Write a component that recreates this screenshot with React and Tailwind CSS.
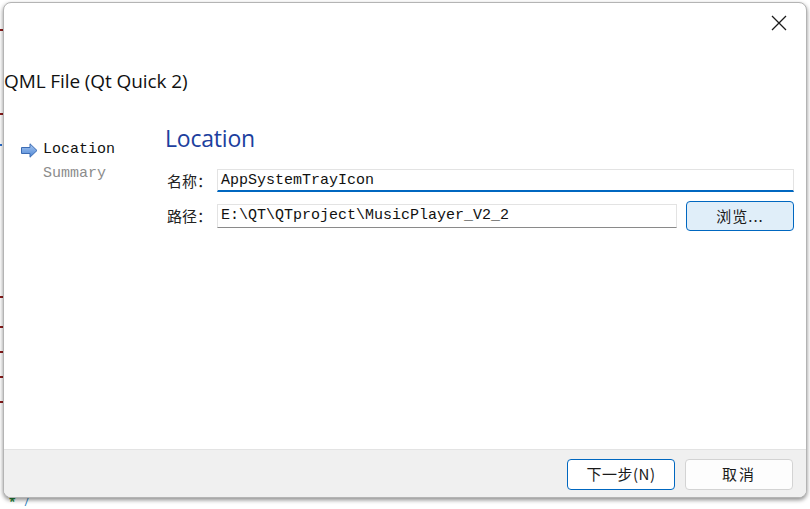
import React from "react";

// --- background editor fragments (left edge peeks out behind the dialog) ---
const marks = [
  { h: 31, color: "#8b1a1a", w: 3 },
  { h: 84, color: "#8b1a1a", w: 3 },
  { h: 31, color: "#2a6fd0", w: 2 },
  { h: 152, color: "#8b1a1a", w: 3 },
  { h: 30, color: "#8b1a1a", w: 3 },
  { h: 25, color: "#8b1a1a", w: 3 },
  { h: 25, color: "#8b1a1a", w: 3 },
  { h: 25, color: "#8b1a1a", w: 3 },
];

const IconArrow = () => (
  <svg width="17" height="15" viewBox="0 0 17 15">
    <defs>
      <linearGradient id="arr" x1="0" y1="0" x2="0" y2="1">
        <stop offset="0" stopColor="#a9c8f2" />
        <stop offset="1" stopColor="#4d86d4" />
      </linearGradient>
    </defs>
    <polygon
      points="0.5,4.5 9,4.5 9,0.8 16,7.5 9,14.2 9,10.5 0.5,10.5"
      fill="url(#arr)"
      stroke="#3c6cb4"
      strokeWidth="1"
      strokeLinejoin="round"
    />
  </svg>
);

const IconClose = () => (
  <svg width="16" height="16" viewBox="0 0 16 16">
    <path d="M1 1L15 15M15 1L1 15" stroke="#1b1b1b" strokeWidth="1.3" />
  </svg>
);

const mono = "font-['Liberation_Mono',monospace]";
const cjk = "font-['Noto_Sans_CJK_SC',sans-serif]";

export default function App() {
  return (
    <div className="relative w-[810px] h-[509px] bg-white overflow-hidden">
      {/* editor behind */}
      <div className="flex flex-col">
        {marks.map((m, i) => (
          <div key={i} className="flex flex-col" style={{ height: m.h }}>
            <div className="mt-auto h-[2px]" style={{ width: m.w, backgroundColor: m.color }} />
          </div>
        ))}
        <div className="flex items-end gap-[9px] pl-[9px] pt-[94px]">
          <span className="text-[12px] leading-[10px] text-[#1f8a3a] font-bold">*</span>
          <span className="text-[11px] leading-[10px] text-[#2a7fc0]">/</span>
        </div>
      </div>

      {/* dialog */}
      <div className="absolute left-[3px] top-[2px] w-[804px] h-[496px] flex flex-col bg-white border border-[#b4b4b4] rounded-[8px] overflow-hidden shadow-[0_2px_4px_rgba(0,0,0,0.45)]">
        <div className="h-[40px] flex items-center justify-end pr-[19px] shrink-0">
          <IconClose />
        </div>
        <div className="h-[76px] flex items-center shrink-0 font-['Open_Sans',sans-serif] text-[19px] text-[#111] tracking-[-0.1px]">
          QML File (Qt Quick 2)
        </div>

        <div className="flex-1 flex">
          {/* nav */}
          <div className={`w-[161px] shrink-0 pl-[17px] pt-[19px] flex flex-col text-[15px] leading-[24px] ${mono}`}>
            <div className="flex items-center gap-[5px]">
              <IconArrow />
              <span className="text-[#111]">Location</span>
            </div>
            <div className="pl-[22px] text-[#8c8c8c]">Summary</div>
          </div>

          {/* page */}
          <div className="flex-1 flex flex-col pt-[4px] pr-[12px]">
            <div className="font-['Open_Sans',sans-serif] text-[23px] leading-[30px] text-[#1d3f9e] tracking-[-0.2px]">
              Location
            </div>
            <div className="mt-[16px] flex items-center h-[23px]">
              <div className={`w-[52px] pl-[2px] pt-[1px] text-[15px] text-[#222] ${cjk}`}>名称：</div>
              <div className={`flex-1 h-[23px] flex items-center pl-[3px] pt-[3px] border border-[#e3e3e3] border-b-2 border-b-[#0067c0] text-[15px] text-[#111] ${mono}`}>
                AppSystemTrayIcon
              </div>
            </div>
            <div className="mt-[9px] flex items-center h-[30px] gap-[9px]">
              <div className="flex-1 flex items-center">
                <div className={`w-[52px] pl-[2px] text-[15px] text-[#222] ${cjk}`}>路径：</div>
                <div className={`flex-1 h-[24px] flex items-center pl-[3px] pt-[1px] border border-[#e3e3e3] border-b-[#8a8a8a] text-[15px] text-[#111] ${mono}`}>
                  E:\QT\QTproject\MusicPlayer_V2_2
                </div>
              </div>
              <button className={`w-[108px] h-[30px] rounded-[4px] border border-[#0067c0] bg-[#e0eef9] text-[15px] text-[#1a1a1a] tracking-[1px] ${cjk}`}>
                浏览...
              </button>
            </div>
          </div>
        </div>

        {/* footer */}
        <div className="h-[48px] shrink-0 bg-[#f0f0f0] border-t border-[#e3e3e3] flex items-start justify-end gap-[10px] pt-[9px] pr-[13px]">
          <button className={`w-[108px] h-[31px] rounded-[4px] border border-[#0067c0] bg-white text-[15px] text-[#1a1a1a] tracking-[0.5px] ${cjk}`}>
            下一步(N)
          </button>
          <button className={`w-[108px] h-[31px] rounded-[4px] border border-[#d3d3d3] bg-[#fdfdfd] text-[15px] text-[#1a1a1a] tracking-[2px] ${cjk}`}>
            取消
          </button>
        </div>
      </div>
    </div>
  );
}
